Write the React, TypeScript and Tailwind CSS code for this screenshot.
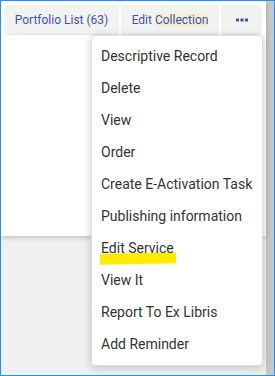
import React from "react";

const items = [
  "Descriptive Record",
  "Delete",
  "View",
  "Order",
  "Create E-Activation Task",
  "Publishing information",
  "Edit Service",
  "View It",
  "Report To Ex Libris",
  "Add Reminder",
];

export default function App() {
  return (
    <div
      className="w-[275px] h-[376px] border border-[#1e90ff] flex bg-[#f0f0f0] overflow-hidden"
      style={{ fontFamily: "Roboto, 'Liberation Sans', sans-serif" }}
    >
      <div className="relative w-[265px] h-full flex flex-col">
        <div className="h-[235px] bg-white shadow-[0_2px_4px_rgba(0,0,0,0.18)] pt-[4px] px-[3px]">
          <div className="flex gap-[2px] h-[30px] text-[12px] text-[#3f51b0]">
            <div className="w-[115px] bg-[#f2f2f2] rounded-l-[5px] border-b border-[#e2e2e2] flex items-center justify-center">
              Portfolio List (63)
            </div>
            <div className="w-[98px] bg-[#f2f2f2] border-b border-[#e2e2e2] flex items-center justify-center">
              <span>
                Edit <span className="bg-[#f4eed2]">Collection</span>
              </span>
            </div>
            <div className="w-[41px] bg-[#f2f2f2] rounded-r-[5px] border-b border-[#e2e2e2] flex items-center justify-center">
              <svg width="12" height="4" viewBox="0 0 12 4">
                <rect x="0" y="0.5" width="3" height="3" fill="#3f51b0" />
                <rect x="4.5" y="0.5" width="3" height="3" fill="#3f51b0" />
                <rect x="9" y="0.5" width="3" height="3" fill="#3f51b0" />
              </svg>
            </div>
          </div>
        </div>
        <div className="absolute left-[90px] top-[34px] w-[172px] h-[331px] bg-white border border-[#e0e0e0] rounded-[4px] shadow-[0_2px_10px_rgba(0,0,0,0.2)] py-[4px]">
          {items.map((t) => (
            <div
              key={t}
              className="h-[32px] flex items-center pl-[9px] text-[14px] text-[#333333]"
            >
              {t === "Edit Service" ? (
                <span className="relative">
                  <span className="absolute left-[-1px] right-[-2px] bottom-[-5px] h-[11px] bg-[#ffea00] -rotate-1" />
                  <span className="relative">{t}</span>
                </span>
              ) : (
                t
              )}
            </div>
          ))}
        </div>
      </div>
      <div className="w-[8px] h-full bg-[#c6c6c6]" />
    </div>
  );
}
